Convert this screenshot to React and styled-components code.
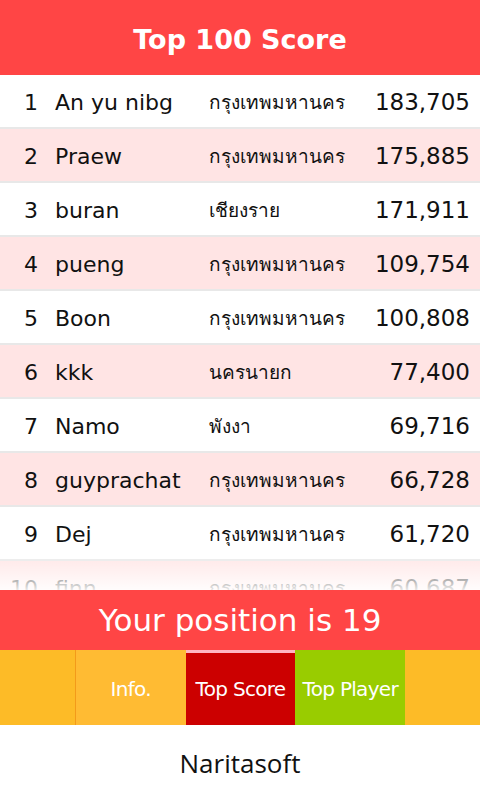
import React from 'react'
import styled, { createGlobalStyle } from 'styled-components'

const GlobalStyle = createGlobalStyle`
  html, body {
    margin: 0;
    padding: 0;
    background: #fff;
  }
  body {
    font-family: 'DejaVu Sans', 'Noto Sans', sans-serif;
  }
`

const players = [
  { rank: 1, name: 'An yu nibg', city: 'กรุงเทพมหานคร', score: '183,705' },
  { rank: 2, name: 'Praew', city: 'กรุงเทพมหานคร', score: '175,885' },
  { rank: 3, name: 'buran', city: 'เชียงราย', score: '171,911' },
  { rank: 4, name: 'pueng', city: 'กรุงเทพมหานคร', score: '109,754' },
  { rank: 5, name: 'Boon', city: 'กรุงเทพมหานคร', score: '100,808' },
  { rank: 6, name: 'kkk', city: 'นครนายก', score: '77,400' },
  { rank: 7, name: 'Namo', city: 'พังงา', score: '69,716' },
  { rank: 8, name: 'guyprachat', city: 'กรุงเทพมหานคร', score: '66,728' },
  { rank: 9, name: 'Dej', city: 'กรุงเทพมหานคร', score: '61,720' },
  { rank: 10, name: 'finn', city: 'กรุงเทพมหานคร', score: '60,687' },
]

const tabs = [
  { label: 'Info.', bg: '#ffbb33', active: false },
  { label: 'Top Score', bg: '#cc0000', active: true },
  { label: 'Top Player', bg: '#99cc00', active: false },
]

const App = () => {
  return (
    <Screen>
      <GlobalStyle />
      <Header>Top 100 Score</Header>

      {/* Score list, cut at the bottom with a fade */}
      <List>
        {players.map((p) => (
          <Row key={p.rank} odd={p.rank % 2 === 0}>
            <Rank>{p.rank}</Rank>
            <Name>{p.name}</Name>
            <City>{p.city}</City>
            <Score>{p.score}</Score>
          </Row>
        ))}
        <Fade />
      </List>

      <Position>Your position is 19</Position>

      <TabBar>
        <TabFiller edge />
        {tabs.map((t) => (
          <Tab key={t.label} bg={t.bg} active={t.active}>
            {t.label}
          </Tab>
        ))}
        <TabFiller />
      </TabBar>

      <Footer>Naritasoft</Footer>
    </Screen>
  )
}

const Screen = styled.div`
  width: 480px;
  height: 800px;
  display: flex;
  flex-direction: column;
  overflow: hidden;
`
const Header = styled.div`
  height: 75px;
  flex: none;
  background-color: #ff4545;
  color: #fff;
  display: flex;
  align-items: center;
  justify-content: center;
  font-size: 27px;
  font-weight: bold;
  padding-top: 3px;
  box-sizing: border-box;
`
const List = styled.div`
  position: relative;
  height: 515px;
  flex: none;
  overflow: hidden;
`
const Row = styled.div`
  height: 54px;
  box-sizing: border-box;
  border-bottom: 2px solid #e8e8e8;
  background-color: ${(p) => (p.odd ? '#ffe4e4' : '#fff')};
  display: grid;
  grid-template-columns: 38px 155px 1fr auto;
  align-items: center;
  color: #111;
  padding-right: 10px;
  padding-top: 2px;
`
const Rank = styled.span`
  text-align: right;
  font-size: 22px;
`
const Name = styled.span`
  padding-left: 17px;
  font-size: 22px;
  white-space: nowrap;
`
const City = styled.span`
  padding-left: 16px;
  font-size: 19px;
  white-space: nowrap;
`
const Score = styled.span`
  text-align: right;
  font-size: 23px;
`
const Fade = styled.div`
  position: absolute;
  left: 0;
  right: 0;
  bottom: 0;
  height: 40px;
  background: linear-gradient(rgba(255, 255, 255, 0), rgba(255, 255, 255, 0.9));
`
const Position = styled.div`
  height: 60px;
  flex: none;
  background-color: #ff4545;
  color: #fff;
  display: flex;
  align-items: center;
  justify-content: center;
  font-size: 31px;
`
const TabBar = styled.div`
  height: 75px;
  flex: none;
  display: flex;
  background-color: #fdbb27;
`
const TabFiller = styled.div`
  width: 75px;
  border-right: ${(p) => (p.edge ? '1px solid #f39a1a' : 'none')};
`
const Tab = styled.div`
  width: 110px;
  box-sizing: border-box;
  background-color: ${(p) => p.bg};
  border-top: 3px solid ${(p) => (p.active ? '#ffb6c1' : p.bg)};
  color: #fff;
  display: flex;
  align-items: center;
  justify-content: center;
  font-size: 20px;
  white-space: nowrap;
  letter-spacing: -0.7px;
`
const Footer = styled.div`
  flex: 1;
  display: flex;
  align-items: center;
  justify-content: center;
  font-size: 26px;
  color: #111;
  font-family: 'Open Sans', 'Noto Sans', sans-serif;
`

export default App
